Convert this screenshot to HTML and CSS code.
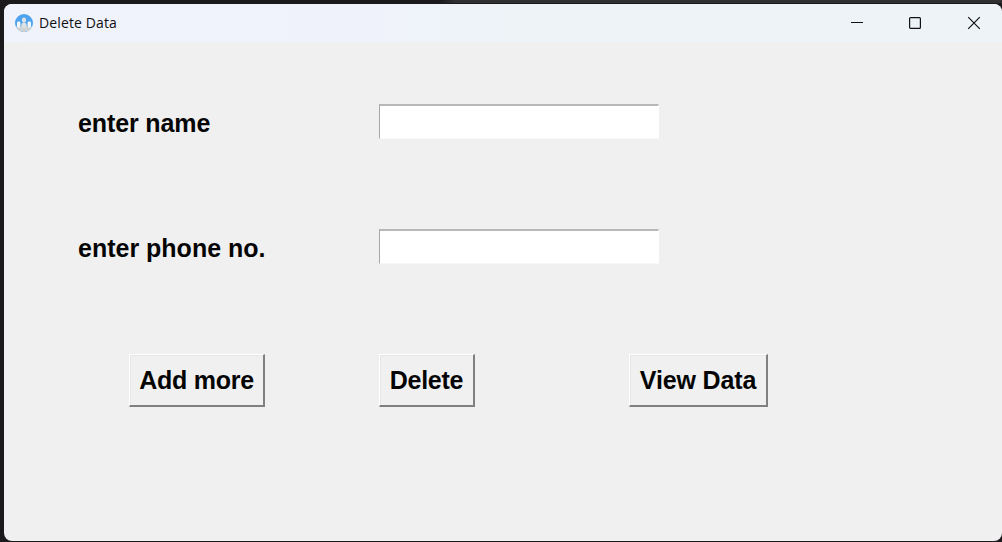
FILE: index.html
```html
<!DOCTYPE html>
<html lang="en">
<head>
<meta charset="utf-8">
<title>Delete Data</title>
<link rel="stylesheet" href="styles.css">
</head>
<body>
<div class="desktop">
  <main class="window">
    <header class="titlebar">
      <svg class="app-icon" width="18" height="18" viewBox="0 0 18 18">
        <defs><clipPath id="disc"><circle cx="9" cy="9" r="9"/></clipPath></defs>
        <g clip-path="url(#disc)">
          <rect width="18" height="18" fill="#4da3ee"/>
          <rect y="12.5" width="18" height="6" fill="#d0d3d4"/>
          <g fill="#f6f8fa"><rect x="2" y="7.4" width="3.4" height="6" rx="1.3"/><rect x="12.6" y="7.4" width="3.4" height="6" rx="1.3"/></g>
          <g fill="#dde1e4"><ellipse cx="9" cy="6.2" rx="2.1" ry="2.7"/><path d="M6.4 14v-3.4q0-1.8 2.6-1.8t2.6 1.8V14z"/></g>
        </g>
      </svg>
      <span class="title">Delete Data</span>
      <div class="controls">
        <svg width="14" height="14" viewBox="0 0 14 14"><path d="M2 6.5h12"/></svg>
        <svg width="14" height="14" viewBox="0 0 14 14"><rect x="1.6" y="1.6" width="10.8" height="10.8" rx="1"/></svg>
        <svg width="14" height="14" viewBox="0 0 14 14"><path d="M1.2 1.2l11.6 11.6M12.8 1.2L1.2 12.8"/></svg>
      </div>
    </header>
    <form class="form">
      <label class="label label-name" for="name">enter name</label>
      <input class="entry" id="name" type="text">
      <label class="label" for="phone">enter phone no.</label>
      <input class="entry" id="phone" type="text">
    </form>
    <div class="actions">
      <button class="btn btn-add" type="button">Add more</button>
      <button class="btn btn-delete" type="button">Delete</button>
      <button class="btn btn-view" type="button">View Data</button>
    </div>
  </main>
</div>
</body>
</html>
```
FILE: styles.css
```css
* { box-sizing: border-box; }
body { margin: 0; overflow: hidden; }
.desktop {
  width: 1002px;
  height: 542px;
  padding: 4px 0 1px 4px;
  background: linear-gradient(90deg, #1b191b 0 440px, #303033 455px) 0 0 / 100% 3px no-repeat, #1b191b;
}
.window {
  height: 537px;
  border-radius: 8px;
  background: #f0f0f0;
  overflow: hidden;
}
.titlebar {
  display: flex;
  align-items: center;
  height: 38px;
  padding: 0 21px 0 11px;
  background: linear-gradient(90deg, #f0f3fc, #f0f2fb 35%, #eef3f8 50%);
}
.app-icon { display: block; }
.title {
  margin-left: 6px;
  font: 14px/20px "Open Sans", "Noto Sans", sans-serif;
  letter-spacing: 0.12px;
  color: #111;
}
.controls { display: flex; gap: 45px; margin-left: auto; }
.controls svg { display: block; fill: none; stroke: #111; stroke-width: 1.2; }
.form {
  display: grid;
  grid-template-columns: 301px 280px;
  row-gap: 90px;
  padding: 62px 0 0 74px;
}
.label, .btn {
  font: bold 25px/29px "Liberation Sans", Arial, sans-serif;
  color: #050505;
}
.label { padding-top: 5px; height: 35px; }
.label-name { letter-spacing: -0.12px; }
.entry {
  width: 280px;
  height: 35px;
  margin: 0;
  padding: 0 3px;
  border: solid;
  border-width: 2px 1px 1px 1px;
  border-color: #b8b8b8 #fff #f8f8f8 #a8a8a8;
  border-radius: 0;
  background: #fff;
  outline: none;
  font: 25px "Liberation Sans", Arial, sans-serif;
}
.actions {
  display: grid;
  grid-template-columns: 250px 250px 250px;
  padding: 90px 0 0 125px;
}
.btn {
  height: 53px;
  padding: 1px 0 0;
  border: solid;
  border-width: 1px 2px 2px 1px;
  border-color: #fff #808080 #808080 #fff;
  background: #f0f0f0;
  box-shadow: inset 1px 1px #e6e6e6;
  letter-spacing: -0.25px;
}
.btn-add { width: 136px; }
.btn-delete { width: 96px; }
.btn-view { width: 139px; letter-spacing: -0.15px; }
```
